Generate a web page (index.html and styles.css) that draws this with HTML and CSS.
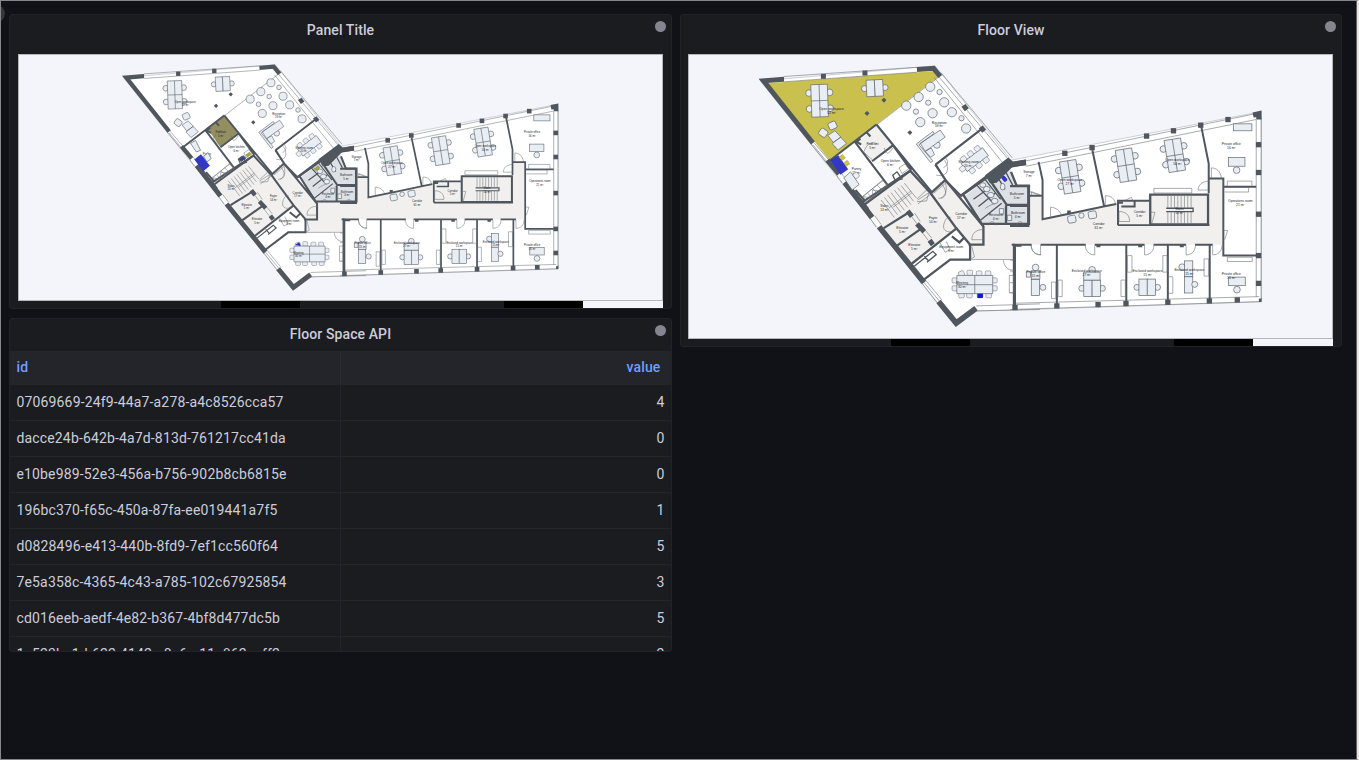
FILE: index.html
```
<!DOCTYPE html>
<html lang="en">
<head>
<meta charset="utf-8">
<title>Floor dashboard</title>
<link rel="stylesheet" href="styles.css">
</head>
<body>
<svg class="defs" width="0" height="0" aria-hidden="true">
<defs>
  <g id="chair"><circle r="9"/></g>
  <g id="desk2"><circle cx="-31" r="9"/><circle cx="31" r="9"/><rect x="-25" y="-25" width="25" height="50"/><rect width="25" y="-25" height="50"/></g>
  <g id="desk4"><circle cx="-31" cy="-24" r="10"/><circle cx="31" cy="-24" r="10"/><circle cx="-31" cy="24" r="10"/><circle cx="31" cy="24" r="10"/><path d="M-25-49h50v98h-50zM0-49v98M-25 0h50"/></g>
  <g id="solo"><circle r="10" cy="25"/><rect x="-25" y="-13" width="50" height="26"/></g>
  <g id="col"><rect class="wall-fill" x="-8" y="-8" width="16" height="16"/></g>
  <g id="seat"><rect x="-12" y="-11" width="24" height="22" rx="5"/></g>

  <g id="rooms">
    <path fill="#fff" stroke="#8a8e94" stroke-width=".4" d="M759.5 80 935 65 1011 160 1262 111V302.5L976 312 956 327Z"/>
    <g transform="translate(750 55) scale(.33333)"><path class="hall" d="M318 250 378 207 428 270 365 318Z"/></g>
    <g transform="translate(830 140) scale(.33333)">
      <path class="hall" d="M105 195 240 92 298 158 343 120 462 262V312H420L378 268 248 375Z"/>
      <path class="wet" d="M400 170 470 118 535 70 560 137H597V256H455Z"/>
    </g>
    <g transform="translate(1010 100) scale(.33333)"><path class="hall" d="M60 290H98V358L283 320 325 305 415 300V285H600V235H642V435H10V480H-115V435H-78V378H60Z"/></g>
  </g>

  <g id="structure">
    <g transform="translate(750 55) scale(.33333)">
      <g class="line"><path d="M100 62 500 34M100 78 500 49M380 207 565 64M552 65 760 325M562 58 775 312M572 50 787 308M178 262 225 320M190 262 240 320M187 268 233 325M258 360 275 384M270 352 290 376"/></g>
      <path class="w14" d="M100 70H99L38 75 187 263M500 41 550 37 570 62M230 315 265 357M283 382 350 465"/>
      <path class="w7" d="M235 318 378 207M314 260 412 390M378 207 545 412 585 375 632 422 775 314M555 329 695 220M330 445 482 345M365 318 428 270 482 345M330 250 318 258 332 268M348 230 360 243M315 405 345 440"/>
      <path class="w4" d="M427 360 440 350 455 371 435 377ZM555 329 567 347"/>
      <g class="line"><path d="M338 425 396 375 409 390 350 440ZM352 415l14 14M366 400l14 14M380 390l14 14M338 425l28 4 0-24 28 4M446 338l18-12 11 15-20 14ZM340 290c10-28 25-32 40-25M340 290l25 23M402 278c4 22 13 20 25 0M558 360c35 8 42-20 25-45M500 432l28-26 18 8-43 33M572 430c25-8 12-35-3-49"/></g>
      <g class="wall-fill"><rect x="211" y="54" width="15" height="15"/><rect x="336" y="44" width="15" height="15"/><path d="M634 153l12-8 10 13-12 9ZM686 218l12-8 10 13-12 9ZM342 173l8-7 7 7-7 8ZM393 133l8-7 7 7-7 8ZM471 231l8-7 7 7-7 8Z"/></g>
      <g class="furn">
        <use href="#desk4" transform="translate(207 135) rotate(-2)"/><use href="#desk2" transform="translate(373 97) rotate(-3)"/>
        <use href="#seat" transform="translate(246 210) rotate(-25)"/><use href="#seat" transform="translate(218 232) rotate(35)"/><path d="M232 240 253 226 271 245 248 261ZM245 265 270 245 288 264 263 284Z"/>
        <circle cx="540" cy="93" r="14"/><circle cx="505" cy="124" r="14"/><circle cx="468" cy="150" r="14"/><circle cx="582" cy="140" r="14"/><circle cx="547" cy="173" r="14"/><circle cx="605" cy="170" r="14"/><circle cx="510" cy="200" r="14"/><circle cx="648" cy="219" r="14"/>
        <circle cx="568" cy="109" r="8"/><circle cx="534" cy="141" r="8"/><circle cx="497" cy="168" r="8"/><circle cx="634" cy="188" r="8"/>
        <circle cx="560" cy="269" r="10"/><path d="M510 264 570 224 585 245 525 288ZM525 288l18-10 10 20-12 8ZM498 266 548 228 552 234 506 268 548 317 541 322Z"/>
        <g transform="translate(674 313) rotate(-37)"><rect x="-40" y="-15" width="80" height="30"/><use href="#seat" transform="translate(-26 -22) scale(.7)"/><use href="#seat" transform="translate(0 -22) scale(.7)"/><use href="#seat" transform="translate(26 -22) scale(.7)"/><use href="#seat" transform="translate(-26 22) scale(.7)"/><use href="#seat" transform="translate(0 22) scale(.7)"/><use href="#seat" transform="translate(26 22) scale(.7)"/><use href="#seat" transform="translate(-46 0) scale(.7)"/></g>
      </g>
    </g>

    <g transform="translate(830 140) scale(.33333)">
      <path class="wall-fill" d="M465 105 535 52 550 65 588 58V75L547 80 500 128 480 130Z"/>
      <path class="w16" d="M43 127 125 233M146 261 281 429M325 487 378 552 438 507"/>
      <path class="line" d="M120 237 137 262M133 228 152 254M275 432 320 490M286 422 335 482M280 428 328 486M438 500 630 494M438 515 630 511M425 360H552"/>
      <path class="w8" d="M103 193 240 92 300 158 378 265 420 315V360H360L275 425M316 73 346 120 460 260V315H415M160 265 240 215M200 318 275 265M245 372 380 265M552 318H575M552 312V500M400 165 455 252H597V137H560L543 95M392 168 470 113M485 128 530 195H597M528 197V255M365 290 388 308 404 292"/>
      <path class="w14" d="M232 213 245 230M260 252 282 276M298 302 308 315"/>
      <path class="w4" d="M440 135 490 190M465 118 512 178M415 190 450 242 515 190M430 178 478 143M445 200 495 160M252 380 308 335 318 345 290 368M282 350 296 365M505 115 525 148M527 95 548 135"/>
      <g class="line"><path d="M152 180 192 233M162 172 202 225M172 165 212 218M182 158 222 211M192 150 232 202M202 143 242 194M212 136 250 184M222 129 258 174M175 205 242 153M188 202 245 158M243 229 260 252M253 220 270 245M277 280 294 302M286 272 304 295M262 180 296 158 289 183 260 185M304 153 340 122M310 160 346 129M345 125c10 35-5 50-20 50M340 82c20-10 12-25 0-35M382 265c-20 20-50 12-40-15 3-12 12-22 20-17M460 300H425c0-20 15-32 35-30M425 320 433 352 420 360M520 362c2 18 12 30 30 30M538 408h13v53h-13ZM95 170 160 120 172 135 110 188M330 310l15 28 15-8-12-25M603 315c2 20 12 30 30 30M600 155l30 12M475 257c2-15 20-15 22 0M560 257c2-15 18-15 20-2M465 206c10-8 22-14 30-14"/></g>
      <g class="furn"><ellipse cx="470" cy="147" rx="10" ry="8"/><ellipse cx="482" cy="165" rx="10" ry="8"/><ellipse cx="494" cy="183" rx="10" ry="8"/><ellipse cx="458" cy="135" rx="9" ry="7"/><ellipse cx="518" cy="140" rx="7" ry="10"/><path d="M508 206h13v16h-13ZM532 226h13v16h-13Z"/>
        <use href="#seat" transform="translate(394 403) rotate(-20) scale(.7)"/><use href="#seat" transform="translate(419 400) scale(.7)"/><use href="#seat" transform="translate(447 402) scale(.7)"/><use href="#seat" transform="translate(474 402) scale(.7)"/><use href="#seat" transform="translate(394 468) scale(.7)"/><use href="#seat" transform="translate(418 468) scale(.7)"/><use href="#seat" transform="translate(450 468) scale(.7)"/><use href="#seat" transform="translate(476 468) scale(.7)"/><use href="#seat" transform="translate(374 423) scale(.7)"/><use href="#seat" transform="translate(374 447) scale(.7)"/><use href="#seat" transform="translate(493 423) scale(.7)"/><use href="#seat" transform="translate(493 447) scale(.7)"/>
        <path d="M380 408H488V463H380ZM434 408V463M380 436H488"/></g>
    </g>

    <g transform="translate(1010 100) scale(.33333)">
      <path class="line" d="M48 182 745 38M48 198 740 57M756 50V605M741 57V593M0 631 757 607V595M15 612 750 592"/>
      <path class="w16" d="M0 194 48 186"/>
      <path class="w6" d="M86 185 98 240V358L200 337 285 319 320 312M248 150 283 318M576 80 598 190V280M5 435H65M92 435H228M255 435H405M432 435H530M557 435H610M15 435V620M141 435V614M350 435V612M475 435V608M601 435V602M325 376H600M600 235H642V468H741M642 260H741M325 376V302H375V320H335M375 302H420M60 287H95"/>
      <path class="w8" d="M422 284H596V374H422ZM55 258V378H0M0 318H55M0 258H55M322 308H340"/>
      <path class="w4" d="M470 325H551V335H470"/>
      <path class="wall-fill" d="M172 332h11v9h-11ZM260 435h12v8h-12ZM386 435h12v8h-12ZM511 435h12v8h-12Z"/>
      <path class="line" d="M475 288V324M485 288V324M495 288V324M505 288V324M515 288V324M525 288V324M535 288V324M545 288V324M475 336V370M485 336V370M495 336V370M505 336V370M515 336V370M525 336V370M535 336V370M545 336V370M433 265H547V279H433ZM122 352V322c16 0 30 12 33 25M287 315V287c18 0 28 10 30 25M328 365V335c18 0 32 8 32 30ZM418 337h18l-9 34M598 270H566c0-15 12-26 32-27M606 235V203c15 0 28 10 30 32M642 392h13l-9 28M345 302 365 292 370 302M65 285V275L92 285M92 437V466c-17 0-28-12-28-29M255 437V466c-17 0-28-12-28-29M405 437V466c17 0 28-12 28-29M530 437V466c17 0 28-12 28-29M610 437V466c17 0 28-12 28-29M654 243H728V258M654 243V258M646 262H718V276H646M654 473H729V486H654ZM125 548H138V598H125ZM145 542H157V592H145ZM334 542H347V592H334ZM353 468H367V518H353ZM460 468H473V518H460ZM477 532H490V582H477ZM584 478H598V530H584ZM0 482H12M0 515H12M0 550H12M0 580H12"/>
      <use href="#col" x="165" y="159"/><use href="#col" x="247" y="142"/><use href="#col" x="411" y="107"/><use href="#col" x="492" y="91"/><use href="#col" x="574" y="74"/><use href="#col" x="656" y="57"/><path class="wall-fill" d="M730 36 757 30V57H741V50L733 51Z"/>
      <use href="#col" x="748" y="133"/><use href="#col" x="748" y="217"/><use href="#col" x="748" y="343"/><use href="#col" x="748" y="468"/><use href="#col" x="748" y="552"/><rect class="wall-fill" x="749" y="598" width="7" height="10"/>
      <use href="#col" x="15" y="625"/><use href="#col" x="141" y="620"/><use href="#col" x="265" y="616"/><use href="#col" x="349" y="613"/><use href="#col" x="475" y="609"/><use href="#col" x="600" y="605"/><use href="#col" x="684" y="602"/>
      <g class="furn">
        <use href="#desk4" transform="translate(181 230) rotate(-9)"/><use href="#desk4" transform="translate(349 195) rotate(-9)"/><use href="#desk4" transform="translate(496 165) rotate(-9)"/>
        <use href="#desk2" transform="translate(247 567)"/><use href="#desk2" transform="translate(413 564)"/>
        <rect x="672" y="70" width="56" height="21"/><use href="#solo" transform="translate(682 185)"/><use href="#solo" transform="translate(683 546)"/>
        <circle cx="77" cy="504" r="10"/><rect x="64" y="514" width="26" height="25"/><rect x="49" y="517" width="13" height="16"/><rect x="64" y="540" width="25" height="49"/><circle cx="99" cy="564" r="9"/>
        <circle cx="247" cy="511" r="10"/><rect x="222" y="518" width="49" height="24"/>
        <circle cx="518" cy="503" r="10"/><rect x="525" y="484" width="25" height="48"/><rect x="525" y="532" width="25" height="49"/><circle cx="556" cy="555" r="9"/>
        <use href="#seat" transform="translate(186 358) rotate(-10)"/><use href="#seat" transform="translate(248 345) rotate(-10)"/><circle cx="215" cy="347" r="8"/>
      </g>
    </g>

    <g class="label">
      <text x="831" y="109">Open workspace</text><text x="831" y="113">52 m²</text>
      <text x="939" y="123">Reception</text><text x="939" y="127">59 m²</text>
      <text x="968.5" y="163">Meeting room</text><text x="968" y="167">20 m²</text>
      <text x="872" y="145">Podcast</text><text x="872" y="149">5 m²</text>
      <text x="890" y="162">Open kitchen</text><text x="890" y="166">6 m²</text>
      <text x="856" y="170">Pantry</text><text x="856" y="174">15 m²</text>
      <text x="884" y="207">Stairs</text><text x="884" y="211">13 m²</text>
      <text x="902" y="229">Elevator</text><text x="902" y="233">5 m²</text>
      <text x="914" y="246">Elevator</text><text x="914" y="250">5 m²</text>
      <text x="933" y="219">Foyer</text><text x="933" y="223">14 m²</text>
      <text x="961" y="215">Corridor</text><text x="961" y="219">17 m²</text>
      <text x="951" y="248">Equipment room</text><text x="951" y="252">9 m²</text>
      <text x="962" y="285">Meeting</text><text x="962" y="289">30 m²</text>
      <text x="996" y="216">Restroom</text><text x="996" y="220">4 m²</text>
      <text x="1017" y="195">Bathroom</text><text x="1017" y="199">5 m²</text>
      <text x="1018" y="214">Bathroom</text><text x="1018" y="218">4 m²</text>
      <text x="1029" y="173">Storage</text><text x="1029" y="177">7 m²</text>
      <text x="1070" y="181">Open workspace</text><text x="1070" y="185">27 m²</text>
      <text x="1178" y="161">Open workspace</text><text x="1178" y="165">54 m²</text>
      <text x="1232" y="145">Private office</text><text x="1232" y="149">16 m²</text>
      <text x="1241" y="202">Operations room</text><text x="1241" y="206">21 m²</text>
      <text x="1140" y="213">Corridor</text><text x="1140" y="217">5 m²</text>
      <text x="1099" y="225">Corridor</text><text x="1099" y="229">61 m²</text>
      <text x="1180" y="210">Stairs</text><text x="1180" y="214">14 m²</text>
      <text x="1036" y="274">Private office</text><text x="1036" y="278">15 m²</text>
      <text x="1087" y="273">Enclosed workspace</text><text x="1087" y="277">27 m²</text>
      <text x="1148" y="273">Enclosed workspace</text><text x="1148" y="277">15 m²</text>
      <text x="1190" y="272">Enclosed workspace</text><text x="1190" y="276">15 m²</text>
      <text x="1232" y="276">Private office</text><text x="1232" y="280">16 m²</text>
    </g>
  </g>
</defs>
</svg>

<main class="dashboard">
  <div class="edge-knob"></div>
  <div class="column">
    <section class="panel panel-plan">
      <h2 class="panel-title">Panel Title</h2><span class="dot"></span>
      <svg class="plan plan-small" viewBox="638.7 53.7 743.5 285" preserveAspectRatio="none">
        <use href="#rooms"/>
        <path fill="#938f60" transform="translate(750 55) scale(.33333)" d="M318 250 378 207 428 270 365 318Z"/>
        <use href="#structure"/>
        <g transform="translate(1010.9 207.3) scale(1.1545) translate(-340.85 -187) translate(110 55) scale(.33333)">
          <g class="furn"><path d="M241 264 256 255 271 285 258 290ZM280 304 293 292 303 310 290 320Z"/></g>
          <path fill="#3238c4" d="M252 313 272 297 299 332 279 348Z"/>
          <path fill="#3b3f8f" stroke="#4c5158" stroke-width="3" d="M386 312 400 302 407 309 392 319Z"/>
          <path fill="#aaa044" d="M405 299 418 289 424 297 411 306ZM612 340 625 331 630 337 617 348Z"/>
        </g>
        <path fill="#2229cc" transform="translate(1010.9 207.3) scale(1.1545) translate(-340.85 -187) translate(180 130) scale(.33333)" d="M345 346 357 338 362 349Z"/>
      </svg>
      <div class="strip"><i class="gap-a"></i><i class="black"></i><i class="gap-b"></i><i class="black"></i><i class="pale"></i></div>
    </section>
    <section class="panel panel-table">
      <h2 class="panel-title">Floor Space API</h2><span class="dot"></span>
      <div class="table">
        <div class="row head"><span>id</span><span>value</span></div>
        <div class="row"><span>07069669-24f9-44a7-a278-a4c8526cca57</span><span>4</span></div>
        <div class="row"><span>dacce24b-642b-4a7d-813d-761217cc41da</span><span>0</span></div>
        <div class="row"><span>e10be989-52e3-456a-b756-902b8cb6815e</span><span>0</span></div>
        <div class="row"><span>196bc370-f65c-450a-87fa-ee019441a7f5</span><span>1</span></div>
        <div class="row"><span>d0828496-e413-440b-8fd9-7ef1cc560f64</span><span>5</span></div>
        <div class="row"><span>7e5a358c-4365-4c43-a785-102c67925854</span><span>3</span></div>
        <div class="row"><span>cd016eeb-aedf-4e82-b367-4bf8d477dc5b</span><span>5</span></div>
        <div class="row"><span>1c523ba1d-622-4142-a0c6-a11c862caff2</span><span>2</span></div>
      </div>
    </section>
  </div>
  <section class="panel panel-view">
    <h2 class="panel-title">Floor View</h2><span class="dot"></span>
    <svg class="plan plan-large" viewBox="688 54 645 285" preserveAspectRatio="none">
      <use href="#rooms"/>
      <path fill="#c9c04e" transform="translate(750 55) scale(.33333)" d="M50 82 552 45 565 63 378 207 237 315Z"/>
      <use href="#structure"/>
      <g transform="translate(750 55) scale(.33333)">
        <g class="furn"><path d="M280 368 300 350 326 388 305 405Z"/><use href="#seat" transform="translate(317 361) rotate(50) scale(.7)"/></g>
        <path fill="#3238c4" d="M239 315 263 300 293 342 270 359Z"/>
        <path fill="#d0c53f" stroke="#77724a" d="M265 305 276 297 285 308 274 316ZM280 323 290 315 298 326 287 333Z"/>
        <rect x="-9" y="-6" width="18" height="12" rx="4" fill="#2e34c8" transform="translate(763 371) rotate(50)"/>
      </g>
      <rect x="977.3" y="294.3" width="5.5" height="4.4" fill="#1015e0"/>
    </svg>
    <div class="strip"><i class="gap-a"></i><i class="black"></i><i class="gap-b"></i><i class="black"></i><i class="pale"></i></div>
  </section>
</main>
</body>
</html>
```
FILE: styles.css
```
* { box-sizing: border-box; }
body { margin: 0; background: #111217; color: #ccccdc; font: 14px/20px Roboto, sans-serif; letter-spacing: .15px; }
.defs { position: absolute; }
.dashboard { position: relative; width: 1359px; height: 760px; overflow: hidden; display: flex; align-items: flex-start; gap: 8px; padding: 13px 0 0 8px; border: 1px solid #85878a; border-right: 2px solid #e9e4e1; box-shadow: inset -1px 0 #606267; }
.edge-knob { position: absolute; left: -13px; top: 4px; width: 17px; height: 17px; border-radius: 50%; background: #34363a; }
.column { display: flex; flex-direction: column; gap: 9px; }
.panel { position: relative; width: 663px; overflow: hidden; background: #1b1c20; border: 1px solid #212328; border-radius: 3px; display: flex; flex-direction: column; }
.panel-plan { height: 295px; }
.panel-table { height: 334px; }
.panel-view { width: 662px; height: 333px; }
.panel-title { margin: 0; height: 32px; flex: none; font-size: 14px; line-height: 31px; font-weight: 500; letter-spacing: .1px; text-align: center; }
.dot { position: absolute; right: 5px; top: 6px; width: 11px; height: 11px; border-radius: 50%; background: #85858f; }
.plan { display: block; flex: none; width: 645px; margin: 7px 8px 0; background: #f4f5fa; border: 1px solid #b5b7bb; }
.plan-small { height: 247px; }
.plan-large { height: 285px; margin-left: 7px; }
.strip { display: flex; flex: 1; width: 645px; margin: 0 8px; }
.panel-view .strip { margin-left: 7px; }
.gap-a { width: 203px; }
.gap-b { width: 204px; }
.black { width: 79px; background: #000; }
.pale { flex: 1; background: #f4f5fa; }
.row { display: grid; grid-template-columns: 331px 330px; height: 36px; line-height: 35px; border-bottom: 1px solid #24252a; }
.row span { padding: 0 6.5px; }
.row span:first-child { border-right: 1px solid #24252a; }
.row span:last-child { text-align: right; }
.head { height: 34px; line-height: 33px; background: #24252a; color: #6e9fff; font-weight: 500; }
.head span:first-child { border-color: #2c2d32; }
.row.head span:last-child { padding-right: 10.5px; }

.hall { fill: #f1f0ee; }
.wet { fill: #dde1e6; }
.wall-fill { fill: #50565e; stroke: none; }
.w4, .w6, .w7, .w8, .w14, .w16 { fill: none; stroke: #50565e; }
.w4 { stroke-width: 4; }
.w6 { stroke-width: 6; }
.w7 { stroke-width: 6.5; }
.w8 { stroke-width: 7; }
.w14 { stroke-width: 15; }
.w16 { stroke-width: 17; }
.line { fill: none; stroke: #6c7178; stroke-width: 1.8; }
.furn { fill: #e9eef5; stroke: #60666e; stroke-width: 2.1; }
.label { fill: #222428; font: 3.3px "Liberation Sans", sans-serif; letter-spacing: 0; text-anchor: middle; }
```
